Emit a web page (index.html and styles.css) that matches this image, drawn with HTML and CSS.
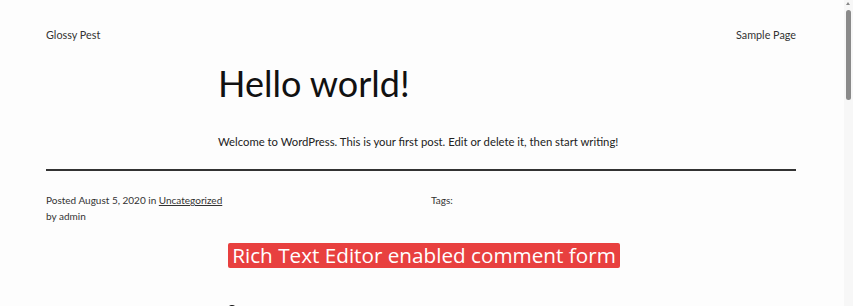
FILE: index.html
```html
<!DOCTYPE html>
<html lang="en">
<head>
    <meta charset="UTF-8">
    <meta name="viewport" content="width=device-width, initial-scale=1.0">
    <title>Hello world! | Glossy Pest</title>
    <link rel="stylesheet" href="styles.css">
</head>
<body>
    <div class="page">
        <header class="site-header">
            <a class="site-title" href="#">Glossy Pest</a>
            <nav class="site-nav">
                <a href="#">Sample Page</a>
            </nav>
        </header>

        <article class="post">
            <h1 class="post-title">Hello world!</h1>
            <div class="post-content">
                <p>Welcome to WordPress. This is your first post. Edit or delete it, then start writing!</p>
            </div>
        </article>

        <hr class="post-sep">

        <footer class="post-meta">
            <div class="meta-left">
                <div>Posted August 5, 2020 in <a href="#">Uncategorized</a></div>
                <div>by admin</div>
            </div>
            <div class="meta-right">Tags:</div>
        </footer>

        <div class="banner-row">
            <span class="banner">Rich Text Editor enabled comment form</span>
        </div>

        <div class="next-strip">
            <span class="next-dot"></span>
        </div>
    </div>

    <div class="scrollbar">
        <span class="scroll-arrow"></span>
        <span class="scroll-thumb"></span>
    </div>
</body>
</html>
```

FILE: styles.css
```css
* {
    margin: 0;
    padding: 0;
    box-sizing: border-box;
}

html, body {
    height: 100%;
    overflow: hidden;
}

body {
    font-family: Lato, "Noto Sans", sans-serif;
    background: #fdfdfd;
    color: #222;
}

a {
    color: inherit;
    text-decoration: none;
}

.page {
    width: 750px;
    margin-left: 46px;
}

.site-header {
    display: flex;
    justify-content: space-between;
    align-items: center;
    padding-top: 26px;
    height: 43px;
    font-size: 10.8px;
    color: #333;
}

.post {
    padding-left: 172px;
}

.post-title {
    font-size: 36px;
    font-weight: 400;
    color: #111;
    line-height: 44px;
    margin-top: 18px;
}

.post-content {
    margin-top: 28px;
    font-size: 11.3px;
    line-height: 18px;
    color: #222;
}

.post-sep {
    border: none;
    border-top: 2px solid #333;
    margin-top: 18px;
}

.post-meta {
    display: grid;
    grid-template-columns: 1fr 1fr;
    column-gap: 20px;
    margin-top: 21px;
    font-size: 10px;
    line-height: 16px;
    color: #333;
}

.post-meta a {
    text-decoration: underline;
}

.banner-row {
    display: flex;
    justify-content: center;
    margin-top: 19px;
    padding-left: 6px;
}

.banner {
    background: #e8403f;
    color: #fff;
    font-family: "Open Sans", "Noto Sans", sans-serif;
    font-size: 20.7px;
    line-height: 25px;
    padding: 0 4px;
    border-radius: 2px;
}

.next-strip {
    position: relative;
    width: 260px;
    margin: 38px 0 0 -36px;
    border-top: 1px solid #ddd;
}

.next-dot {
    position: absolute;
    left: 217px;
    top: -2px;
    width: 10px;
    height: 5px;
    border-radius: 5px 5px 0 0;
    background: #111;
}

.scrollbar {
    position: fixed;
    top: 0;
    right: 0;
    width: 9px;
    height: 100%;
    background: #f7f7f7;
}

.scroll-arrow {
    position: absolute;
    top: 2px;
    left: 2px;
    border-left: 2.5px solid transparent;
    border-right: 2.5px solid transparent;
    border-bottom: 3px solid #888;
}

.scroll-thumb {
    position: absolute;
    top: 10px;
    left: 2px;
    width: 5px;
    height: 90px;
    border-radius: 3px;
    background: #8a8a8a;
}
```
